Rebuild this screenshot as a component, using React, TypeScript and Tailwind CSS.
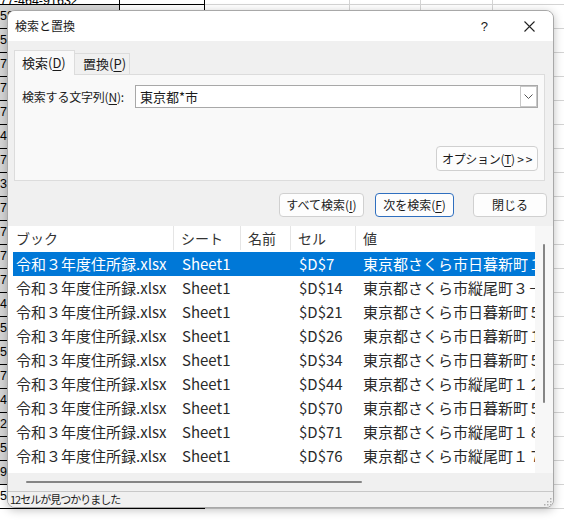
import React from 'react';

const results = [
  { cell: '$D$7', value: '東京都さくら市日暮新町１－３－５' },
  { cell: '$D$14', value: '東京都さくら市縦尾町３－１２－８' },
  { cell: '$D$21', value: '東京都さくら市日暮新町５－２－１' },
  { cell: '$D$26', value: '東京都さくら市日暮新町１－８－４' },
  { cell: '$D$34', value: '東京都さくら市日暮新町５－６－２' },
  { cell: '$D$44', value: '東京都さくら市縦尾町１２－３－９' },
  { cell: '$D$70', value: '東京都さくら市日暮新町５－１－７' },
  { cell: '$D$71', value: '東京都さくら市縦尾町１８－４－２' },
  { cell: '$D$76', value: '東京都さくら市縦尾町１７－２－６' },
];

const sheetText = [
  '077-464-91632',
  '058-235-44120',
  '058-117-80321',
  '070-552-16738',
  '075-889-20417',
  '078-310-66952',
  '047-224-58301',
  '070-615-93028',
  '034-771-20564',
  '070-338-19475',
  '075-902-48113',
  '070-466-35290',
  '078-183-77046',
  '047-530-22918',
  '058-642-10387',
  '058-227-96541',
  '070-814-35062',
  '047-350-81294',
  '027-661-40853',
  '058-993-12076',
  '094-472-61538',
  '058-121-13260',
];

const Sheet: React.FC = () => (
  <div className="-mt-[19px] -ml-[8px] flex flex-col font-['Liberation_Sans',sans-serif] text-[12.5px] text-black">
    {sheetText.map((t, i) => (
      <div key={i} className="flex h-[24px] shrink-0">
        <div
          className={`w-[128px] shrink-0 border-r border-b border-black pl-[1px] flex ${
            i === 0 ? 'items-end' : 'items-center'
          } ${i > 0 && i < sheetText.length - 1 ? 'bg-[#d6d6d6]' : 'bg-white'}`}
        >
          <span className={i === 0 ? 'relative top-[3px] leading-none' : ''}>{t}</span>
        </div>
        <div className="w-[85px] shrink-0 border-r border-b border-black" />
        <div className="w-[145px] shrink-0 border-r border-b border-[#d4d4d4]" />
        <div className="w-[71px] shrink-0 border-r border-b border-[#d4d4d4]" />
        <div className="w-[72px] shrink-0 border-r border-b border-[#d4d4d4]" />
        <div className="w-[80px] shrink-0 border-r border-b border-[#d4d4d4]" />
      </div>
    ))}
  </div>
);

const Btn: React.FC<{ w: string; primary?: boolean; children: React.ReactNode }> = ({ w, primary, children }) => (
  <div
    className={`${w} h-[24px] shrink-0 rounded-[4px] bg-[#fdfdfd] flex items-center justify-center text-[12px] text-[#1a1a1a] ${
      primary ? 'border border-[#2f6fbf]' : 'border border-[#d0d0d0]'
    }`}
  >
    {children}
  </div>
);

const Dialog: React.FC = () => (
  <div className="absolute left-[7px] top-[10px] w-[547px] h-[498px] flex flex-col rounded-lg border border-[#a8a8a8] bg-[#f0f0f0] shadow-[0_2px_10px_rgba(0,0,0,0.25)] overflow-hidden font-['Noto_Sans_CJK_JP',sans-serif] text-[#1a1a1a]">
    {/* title bar */}
    <div className="h-[30px] shrink-0 bg-white flex items-center pl-[7px]">
      <span className="text-[12px] leading-none">検索と置換</span>
      <div className="ml-auto flex items-center pr-[18px]">
        <span className="text-[13px] leading-none font-['Liberation_Sans',sans-serif]">?</span>
        <svg width="11" height="11" viewBox="0 0 11 11" className="ml-[36px]">
          <path d="M0.5 0.5 L10.5 10.5 M10.5 0.5 L0.5 10.5" stroke="#222" strokeWidth="1.1" fill="none" />
        </svg>
      </div>
    </div>

    {/* tabs */}
    <div className="flex items-end pt-[9px] pl-[6px] shrink-0">
      <div className="relative z-10 -mb-px h-[25px] w-[61px] bg-[#f9f9f9] border border-b-0 border-[#dcdcdc] flex items-center pl-[7px] text-[13px]">
        検索(<span className="underline underline-offset-2">D</span>)
      </div>
      <div className="h-[21px] w-[55px] border-t border-r border-[#dcdcdc] flex items-center pl-[8px] text-[13px]">
        置換(<span className="underline underline-offset-2">P</span>)
      </div>
    </div>

    {/* panel */}
    <div className="ml-[6px] mr-[8px] h-[107px] shrink-0 bg-[#f9f9f9] border border-[#dcdcdc] flex flex-col">
      <div className="mt-[10px] flex items-center">
        <div className="w-[120px] shrink-0 pl-[7px] text-[12px] tracking-[-0.2px]">
          検索する文字列(<span className="underline underline-offset-2">N</span>):
        </div>
        <div className="flex-1 mr-[6px] h-[23px] bg-white border border-[#a8a8a8] flex items-center">
          <span className="pl-[4px] text-[13px] flex-1">東京都*市</span>
          <div className="w-[17px] h-[21px] border border-[#c8c8c8] bg-white flex items-center justify-center">
            <svg width="9" height="5" viewBox="0 0 9 5">
              <path d="M0.5 0.5 L4.5 4.5 L8.5 0.5" stroke="#555" strokeWidth="1" fill="none" />
            </svg>
          </div>
        </div>
      </div>
      <div className="mt-[38px] self-end mr-[6px]">
        <div className="w-[102px] h-[25px] rounded-[4px] bg-[#fdfdfd] border border-[#d0d0d0] flex items-center justify-center text-[12px] tracking-[-0.3px]">
          オプション(<span className="underline underline-offset-2">T</span>)&nbsp;&gt;&thinsp;&gt;
        </div>
      </div>
    </div>

    {/* buttons */}
    <div className="mt-[12px] flex justify-end pr-[6px] shrink-0">
      <Btn w="w-[85px]">
        すべて検索(<span className="underline underline-offset-2">I</span>)
      </Btn>
      <div className="w-[11px]" />
      <Btn w="w-[79px]" primary>
        次を検索(<span className="underline underline-offset-2">F</span>)
      </Btn>
      <div className="w-[19px]" />
      <Btn w="w-[74px]">閉じる</Btn>
    </div>

    {/* result list */}
    <div className="mt-[9px] h-[265px] shrink-0 flex flex-col">
      <div className="h-[247px] flex">
        <div className="w-[527px] bg-white flex flex-col overflow-hidden">
          <div className="h-[24px] shrink-0 flex text-[14px] text-[#333]">
            <div className="w-[166px] pl-[8px] border-r border-[#e5e5e5] flex items-center">ブック</div>
            <div className="w-[67px] pl-[7px] border-r border-[#e5e5e5] flex items-center">シート</div>
            <div className="w-[50px] pl-[7px] border-r border-[#e5e5e5] flex items-center">名前</div>
            <div className="w-[65px] pl-[7px] border-r border-[#e5e5e5] flex items-center">セル</div>
            <div className="flex-1 pl-[7px] flex items-center">値</div>
          </div>
          <div className="mt-[2px] ml-[5px] flex flex-col">
            {results.map((r, i) => (
              <div
                key={r.cell}
                className={`h-[24px] flex items-center text-[15px] whitespace-nowrap ${
                  i === 0 ? 'bg-[#0078d7] text-white' : 'text-[#2a2a2a]'
                }`}
              >
                <div className="w-[161px] pl-[3px] shrink-0">令和３年度住所録.xlsx</div>
                <div className="w-[67px] pl-[8px] shrink-0">Sheet1</div>
                <div className="w-[50px] shrink-0" />
                <div className="w-[65px] pl-[8px] shrink-0">{r.cell}</div>
                <div className="flex-1 pl-[7px] overflow-hidden">{r.value}</div>
              </div>
            ))}
          </div>
        </div>
        <div className="w-[18px] bg-[#f7f7f7] flex flex-col items-center pt-[18px]">
          <div className="w-[2px] h-[159px] rounded-full bg-[#858585]" />
        </div>
      </div>
      <div className="h-[18px] bg-[#f0f0f0] flex items-center pl-[18px]">
        <div className="w-[336px] h-[2px] rounded-full bg-[#858585]" />
      </div>
    </div>

    {/* status bar */}
    <div className="flex-1 border-t border-[#c8c8c8] bg-[#f0f0f0] flex items-center pl-[2px] relative">
      <span className="text-[11px] leading-none tracking-[-1px]">12セルが見つかりました</span>
      <svg width="8" height="8" viewBox="0 0 8 8" className="absolute right-[1px] bottom-[1px]">
        <rect x="6" y="0" width="1.5" height="1.5" fill="#b0b0b0" />
        <rect x="3" y="3" width="1.5" height="1.5" fill="#b0b0b0" />
        <rect x="6" y="3" width="1.5" height="1.5" fill="#b0b0b0" />
        <rect x="0" y="6" width="1.5" height="1.5" fill="#b0b0b0" />
        <rect x="3" y="6" width="1.5" height="1.5" fill="#b0b0b0" />
        <rect x="6" y="6" width="1.5" height="1.5" fill="#b0b0b0" />
      </svg>
    </div>
  </div>
);

export default function App() {
  return (
    <div className="relative w-[564px] h-[520px] overflow-hidden bg-white">
      <Sheet />
      <Dialog />
    </div>
  );
}
